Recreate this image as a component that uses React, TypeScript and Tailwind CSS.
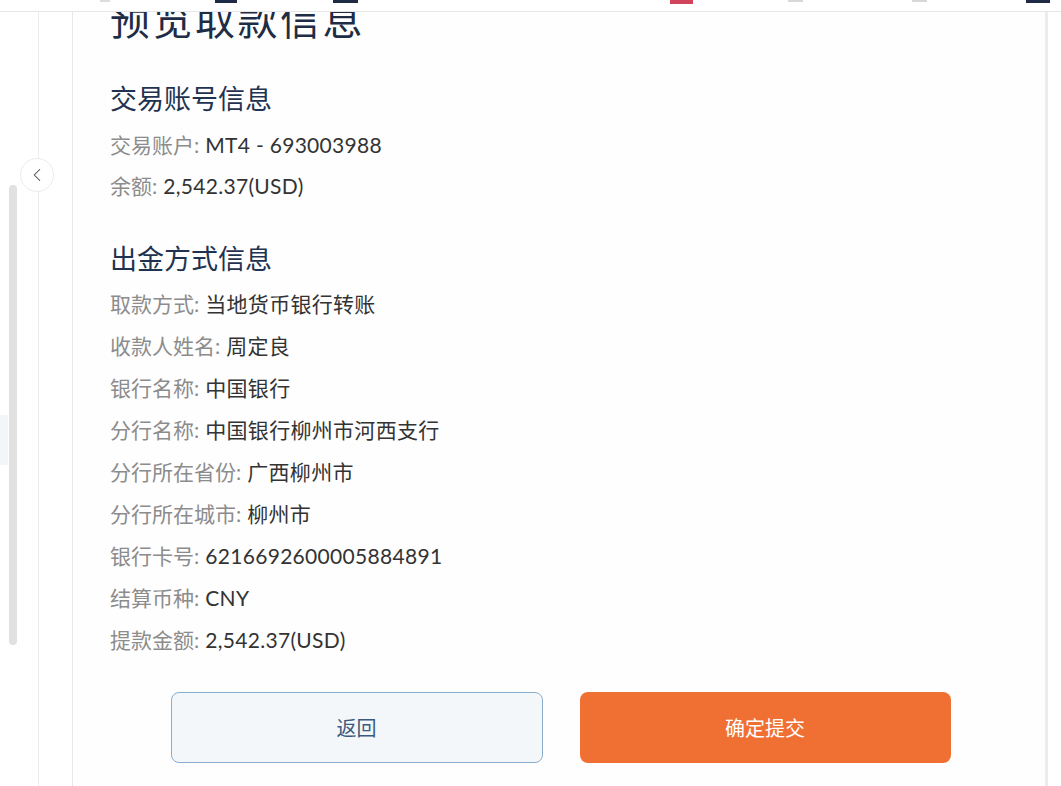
import { ChevronLeft } from "lucide-react";

const font = { fontFamily: "Lato, 'Noto Sans CJK SC', sans-serif" };

const accountRows = [
    { label: "交易账户", value: "MT4 - 693003988" },
    { label: "余额", value: "2,542.37(USD)" },
];

const methodRows = [
    { label: "取款方式", value: "当地货币银行转账" },
    { label: "收款人姓名", value: "周定良" },
    { label: "银行名称", value: "中国银行" },
    { label: "分行名称", value: "中国银行柳州市河西支行" },
    { label: "分行所在省份", value: "广西柳州市" },
    { label: "分行所在城市", value: "柳州市" },
    { label: "银行卡号", value: "6216692600005884891" },
    { label: "结算币种", value: "CNY" },
    { label: "提款金额", value: "2,542.37(USD)" },
];

function Row({ label, value, h }: { label: string; value: string; h: string }) {
    return (
        <div className={`${h} flex items-center text-[21px] whitespace-nowrap`}>
            <span className="text-[#8c8c8c]">{label}:</span>
            <span className="ml-[6px] text-[#333333] tracking-[0.3px]">{value}</span>
        </div>
    );
}

export default function App() {
    return (
        <div className="w-[1061px] h-[786px] bg-white overflow-hidden flex flex-col" style={font}>
            {/* Top bar, mostly scrolled out of view */}
            <div className="h-[12px] shrink-0 border-b border-[#e6e6e6] bg-white flex items-start z-10">
                <span className="ml-[100px] w-[10px] h-[2px] bg-[#dcdcdc]" />
                <span className="ml-[105px] w-[22px] h-[3px] bg-[#1d2c44]" />
                <span className="ml-[96px] w-[25px] h-[3px] bg-[#1d2c44]" />
                <span className="ml-[312px] w-[23px] h-[4px] bg-[#d2445c]" />
                <span className="ml-[95px] w-[15px] h-[2px] bg-[#d8d8d8]" />
                <span className="ml-[109px] w-[15px] h-[2px] bg-[#d8d8d8]" />
                <span className="ml-[99px] w-[24px] h-[3px] bg-[#1d2c44]" />
            </div>

            <div className="flex flex-1 min-h-0">
                {/* Sidebar strip */}
                <div className="relative w-[39px] shrink-0 border-r border-[#ececec]">
                    <div className="absolute left-0 top-[403px] w-[8px] h-[50px] bg-[#f3f6f9]" />
                    <div className="absolute left-[9px] top-[173px] w-[8px] h-[460px] rounded-full bg-[#e1e1e1]" />
                    <button className="absolute left-[20px] top-[146px] w-[34px] h-[34px] rounded-full bg-white border border-[#ececec] flex items-center justify-center text-[#444]">
                        <ChevronLeft size={22} strokeWidth={1.1} />
                    </button>
                </div>
                <div className="w-[33px] shrink-0" />

                {/* Card */}
                <div className="w-[976px] shrink-0 border-l border-r-[3px] border-[#e8e8e8] border-r-[#ececec] bg-[#fefefe] pl-[37px] pr-[37px]">
                    <h1 className="mt-[-12px] h-[40px] text-[40px] leading-none text-[#1e2d45] tracking-[2.5px]">预览取款信息</h1>

                    <h2 className="mt-[45px] h-[28px] text-[27px] leading-[28px] text-[#1f3350]">交易账号信息</h2>
                    <div className="mt-[11px]">
                        {accountRows.map(r => <Row key={r.label} {...r} h="h-[41px]" />)}
                    </div>

                    <h2 className="mt-[39px] h-[28px] text-[27px] leading-[28px] text-[#1f3350]">出金方式信息</h2>
                    <div className="mt-[10px]">
                        {methodRows.map(r => <Row key={r.label} {...r} h="h-[42px]" />)}
                    </div>

                    <div className="mt-[31px] pl-[3px] flex justify-center gap-[37px]">
                        <button className="w-[372px] h-[71px] rounded-[8px] border border-[#8aaccd] bg-[#f4f7fa] text-[20px] text-[#3a5a80]">
                            返回
                        </button>
                        <button className="w-[371px] h-[71px] rounded-[8px] bg-[#f07033] text-[20px] text-white">
                            确定提交
                        </button>
                    </div>
                </div>
            </div>
        </div>
    );
}
